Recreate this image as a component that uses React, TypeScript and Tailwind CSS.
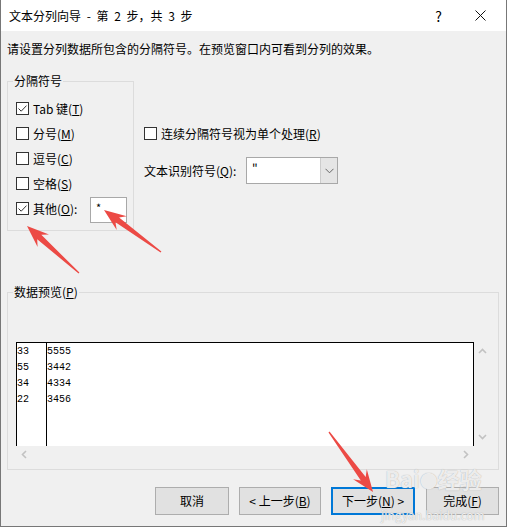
import React from 'react';

const FONT = '"Noto Sans CJK SC", "Noto Sans", sans-serif';

// checkbox square, Win10 style
const Box = ({ checked }: { checked?: boolean }) => (
  <span className="w-[13px] h-[13px] border border-[#333333] bg-white flex items-center justify-center shrink-0">
    {checked && (
      <svg width="11" height="11" viewBox="0 0 11 11">
        <path d="M1.5 5.5 L4.2 8.2 L9.5 2.6" stroke="#333" fill="none" strokeWidth="1" />
      </svg>
    )}
  </span>
);

const Check = ({ checked, children }: { checked?: boolean; children: React.ReactNode }) => (
  <div className="flex items-center gap-[4px] h-[25px]">
    <Box checked={checked} />
    <span className="leading-[16px]">{children}</span>
  </div>
);

const Chevron = ({ dir }: { dir: 'up' | 'down' | 'left' | 'right' }) => {
  const d = {
    up: 'M1 6 L4.5 2.5 L8 6',
    down: 'M1 3 L4.5 6.5 L8 3',
    left: 'M6 1 L2.5 4.5 L6 8',
    right: 'M3 1 L6.5 4.5 L3 8',
  }[dir];
  return (
    <svg width="9" height="9" viewBox="0 0 9 9">
      <path d={d} stroke="#c2c2c2" strokeWidth="1.6" fill="none" />
    </svg>
  );
};

// red annotation arrow from tail to tip
const arrowPoints = (tx: number, ty: number, px: number, py: number) => {
  const len = Math.hypot(px - tx, py - ty);
  const dx = (px - tx) / len;
  const dy = (py - ty) / len;
  const nx = -dy;
  const ny = dx;
  const head = 22;
  const bx = px - dx * head * 0.75;
  const by = py - dy * head * 0.75;
  const wx = px - dx * head;
  const wy = py - dy * head;
  const pts = [
    [tx + nx * 0.6, ty + ny * 0.6],
    [bx + nx * 3, by + ny * 3],
    [wx + nx * 8.5, wy + ny * 8.5],
    [px, py],
    [wx - nx * 8.5, wy - ny * 8.5],
    [bx - nx * 3, by - ny * 3],
    [tx - nx * 0.6, ty - ny * 0.6],
  ];
  return pts.map(([x, y]) => `${x.toFixed(1)},${y.toFixed(1)}`).join(' ');
};

const rows = [
  ['33', '5555'],
  ['55', '3442'],
  ['34', '4334'],
  ['22', '3456'],
];

const Btn = ({ children, primary, w }: { children: React.ReactNode; primary?: boolean; w: string }) => (
  <button
    className={
      primary
        ? `${w} h-[28px] bg-[#e1e1e1] border-2 border-[#0078d7] text-[12px] leading-[16px] text-black`
        : `${w} h-[28px] bg-[#e1e1e1] border border-[#adadad] text-[12px] leading-[16px] text-black`
    }
  >
    {children}
  </button>
);

export default function App() {
  return (
    <div
      className="relative w-[507px] h-[527px] bg-[#f0f0f0] border-x border-b border-[#777777] text-[12px] leading-[16px] text-black overflow-hidden"
      style={{ fontFamily: FONT }}
    >
      {/* title bar */}
      <div className="h-[31px] bg-white flex items-center pl-[8px]">
        <span className="[word-spacing:3px]">文本分列向导 - 第 2 步，共 3 步</span>
        <span className="ml-auto text-[14px]">?</span>
        <svg className="ml-[33px] mr-[20px]" width="11" height="11" viewBox="0 0 11 11">
          <path d="M0.5 0.5 L10.5 10.5 M10.5 0.5 L0.5 10.5" stroke="#111" strokeWidth="1" />
        </svg>
      </div>

      <div className="pl-[6px] pr-[7px]">
        <p className="mt-[10px]">请设置分列数据所包含的分隔符号。在预览窗口内可看到分列的效果。</p>

        <div className="flex mt-[16px]">
          <fieldset className="w-[127px] border border-[#dcdcdc] p-0 m-0">
            <legend className="ml-[5px] px-[1px] leading-[16px]">分隔符号</legend>
            <div className="pl-[8px] pt-[7px] pb-[9px]">
              <Check checked>Tab 键(<u>T</u>)</Check>
              <Check>分号(<u>M</u>)</Check>
              <Check>逗号(<u>C</u>)</Check>
              <Check>空格(<u>S</u>)</Check>
              <div className="flex items-center gap-[4px] h-[25px]">
                <Box checked />
                <span className="w-[53px]">其他(<u>O</u>):</span>
                <div className="w-[37px] h-[26px] bg-white border border-[#a8a8a8] mt-[2px] pl-[5px] pt-[3px] text-[11px] leading-[12px]">*</div>
              </div>
            </div>
          </fieldset>

          <div className="ml-[10px] mt-[52px]">
            <div className="flex items-center gap-[4px] h-[17px]">
              <Box />
              <span>连续分隔符号视为单个处理(<u>R</u>)</span>
            </div>
            <div className="flex items-center mt-[15px]">
              <span className="w-[102px]">文本识别符号(<u>Q</u>):</span>
              <div className="w-[92px] h-[27px] bg-white border border-[#a8a8a8] flex">
                <span className="flex-1 pl-[5px] pt-[4px] leading-[12px]">"</span>
                <span className="w-[17px] bg-[#e5e5e5] border-l border-[#cccccc] flex items-center justify-center">
                  <svg width="9" height="6" viewBox="0 0 9 6">
                    <path d="M0.5 0.8 L4.5 4.8 L8.5 0.8" stroke="#666" strokeWidth="1" fill="none" />
                  </svg>
                </span>
              </div>
            </div>
          </div>
        </div>

        <fieldset className="w-[492px] border border-[#dcdcdc] p-0 m-0 mt-[53px]">
          <legend className="ml-[5px] px-[1px] leading-[16px]">数据预览(<u>P</u>)</legend>
          <div className="pl-[8px] pt-[42px] pb-[7px]">
            <div className="flex">
              <div className="w-[458px] h-[104px] bg-white border-x border-t border-black flex pt-[1px] text-[10px] leading-[16px]" style={{ fontFamily: '"Liberation Mono", monospace' }}>
                <div className="w-[30px] border-r border-black -mt-[1px] pt-[1px]">
                  {rows.map((r) => (
                    <div key={r[0] + r[1]}>{r[0]}</div>
                  ))}
                </div>
                <div className="flex-1">
                  {rows.map((r) => (
                    <div key={r[1]}>{r[1]}</div>
                  ))}
                </div>
              </div>
              <div className="w-[17px] h-[104px] flex flex-col items-center justify-between py-[5px]">
                <Chevron dir="up" />
                <Chevron dir="down" />
              </div>
            </div>
            <div className="w-[458px] h-[16px] flex items-center justify-between px-[4px]">
              <Chevron dir="left" />
              <Chevron dir="right" />
            </div>
          </div>
        </fieldset>
      </div>

      {/* footer buttons */}
      <div className="flex justify-end pr-[7px] mt-[17px]">
        <Btn w="w-[74px]">取消</Btn>
        <div className="ml-[10px]">
          <Btn w="w-[82px]">&lt; 上一步(<u>B</u>)</Btn>
        </div>
        <div className="ml-[10px]">
          <Btn w="w-[84px]" primary>下一步(<u>N</u>) &gt;</Btn>
        </div>
        <div className="ml-[11px]">
          <Btn w="w-[73px]">完成(<u>F</u>)</Btn>
        </div>
      </div>

      {/* watermark */}
      <div className="absolute left-[384px] top-[466px] text-white/80 font-bold text-[22px] leading-[24px] [text-shadow:0_0_1px_#9a9a9a] pointer-events-none">
        Bai<span className="text-[18px]">●</span>经验
      </div>
      <div className="absolute left-[380px] top-[509px] text-white/80 text-[12px] leading-[12px] [text-shadow:0_0_1px_#9a9a9a] pointer-events-none">
        jingyan.baidu.com
      </div>

      {/* annotation arrows */}
      <svg className="absolute left-0 top-0 pointer-events-none" width="507" height="527">
        <polygon points={arrowPoints(78, 273, 26, 226)} fill="#ec4a45" />
        <polygon points={arrowPoints(160, 252, 103, 210)} fill="#ec4a45" />
        <polygon points={arrowPoints(328, 432, 372, 492)} fill="#ec4a45" />
      </svg>
    </div>
  );
}
